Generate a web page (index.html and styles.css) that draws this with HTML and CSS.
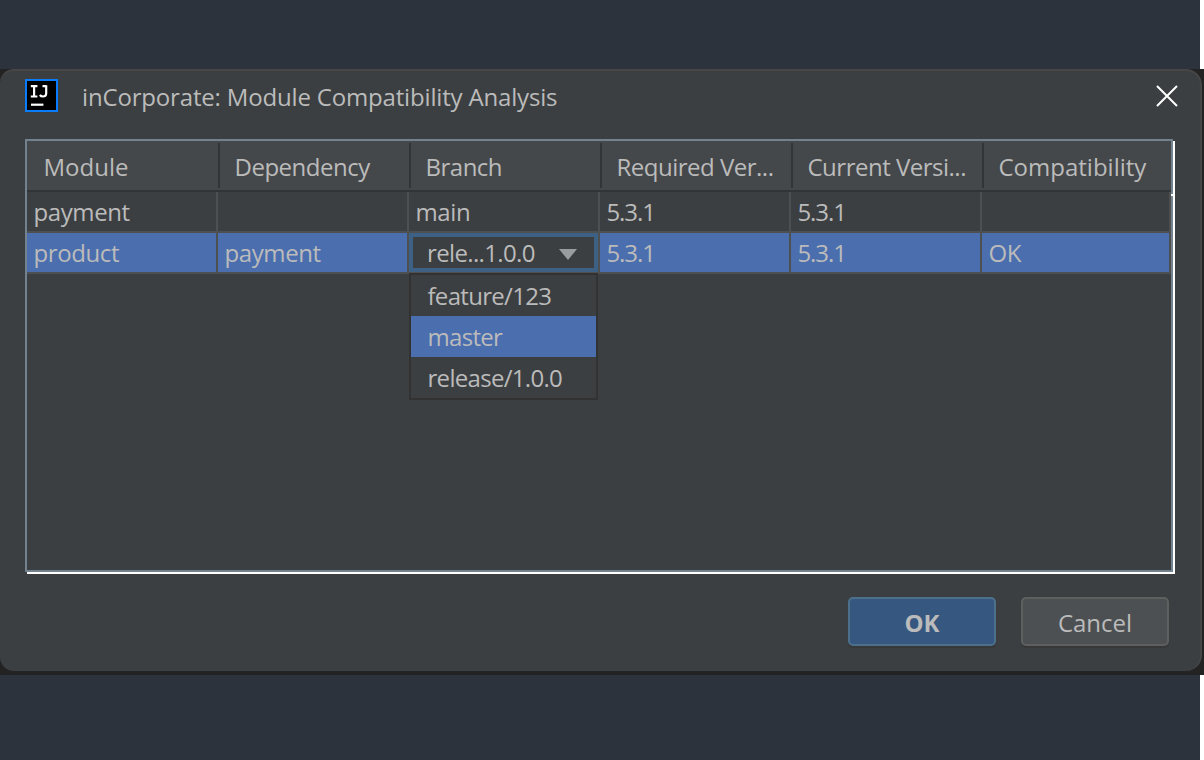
FILE: index.html
```html
<!DOCTYPE html>
<html lang="en">
<head>
<meta charset="utf-8">
<title>inCorporate: Module Compatibility Analysis</title>
<link rel="stylesheet" href="styles.css">
</head>
<body>
<div class="strip strip-top"></div>
<main class="window-area">
  <section class="dialog">
    <header class="titlebar">
      <svg class="app-icon" viewBox="0 0 33 33" width="33" height="33">
        <rect x="1" y="1" width="31" height="31" fill="#000" stroke="#087cfa" stroke-width="2"/>
        <path d="M5.8 7.2h6.6M9.1 7v10.5M5.8 17.5h6.6M21.2 6.2v8q0 3.3-3.2 3.3-2 0-3.2-1.5M17.5 7.2h3.7" fill="none" stroke="#fff" stroke-width="2.2"/>
        <rect x="6" y="24.6" width="12.4" height="2.2" fill="#fff"/>
      </svg>
      <h1 class="title">inCorporate: Module Compatibility Analysis</h1>
      <svg class="close" viewBox="0 0 22 22" width="22" height="22"><path d="M1 1L21 21M21 1L1 21" stroke="#fff" stroke-width="2" fill="none"/></svg>
    </header>
    <div class="table">
      <div class="row head">
        <div class="h">Module</div><div class="h tight">Dependency</div><div class="h tight">Branch</div><div class="h tight">Required Ver...</div><div class="h tight">Current Versi...</div><div class="h">Compatibility</div>
      </div>
      <div class="row">
        <div class="c">payment</div><div class="c"></div><div class="c">main</div><div class="c num">5.3.1</div><div class="c num">5.3.1</div><div class="c"></div>
      </div>
      <div class="row selected">
        <div class="c">product</div><div class="c">payment</div>
        <div class="c editor">
          <div class="combo"><span class="combo-text">rele...1.0.0</span><svg class="arrow" width="18" height="11" viewBox="0 0 18 11"><path d="M0 0h18L9 11z" fill="#9a9da0"/></svg></div>
          <div class="popup">
            <div class="option">feature/123</div>
            <div class="option active">master</div>
            <div class="option">release/1.0.0</div>
          </div>
        </div>
        <div class="c num">5.3.1</div><div class="c num">5.3.1</div><div class="c">OK</div>
      </div>
    </div>
    <footer class="actions">
      <button class="btn primary">OK</button>
      <button class="btn">Cancel</button>
    </footer>
  </section>
</main>
<div class="strip strip-bottom"></div>
</body>
</html>
```
FILE: styles.css
```css
* { box-sizing: border-box; }
body {
  margin: 0;
  width: 1204px;
  height: 760px;
  overflow: hidden;
  display: flex;
  flex-direction: column;
  background: #fff;
  color: #bbb;
  font: 24px/30px "Open Sans", "Noto Sans", sans-serif;
  white-space: nowrap;
}
.strip { width: 1200px; background: #2d333d; }
.strip-top { height: 69px; }
.strip-bottom { height: 85px; }
.window-area { height: 606px; background: #232323; }
.dialog {
  width: 1202px;
  height: 602px;
  background: #3c3f41;
  border: solid #464646;
  border-width: 2px 2px 0 0;
  border-radius: 14px 16px 16px 14px;
}
.titlebar {
  height: 68px;
  padding: 8px 22px 0 25px;
  display: flex;
  align-items: flex-start;
}
.title {
  margin: 3px auto 0 24px;
  font-size: 24px;
  font-weight: 400;
  letter-spacing: -0.17px;
}
.close { margin-top: 6px; }
.table {
  position: relative;
  width: 1148px;
  height: 433px;
  margin-left: 25px;
  border: 2px solid #72838f;
  box-shadow: 2px 2px #fff;
}
.table::after {
  content: "";
  position: absolute;
  right: -2px;
  top: 53px;
  width: 2px;
  height: 2px;
  background: #fff;
}
.row {
  width: 1144px;
  height: 41px;
  display: grid;
  grid-template-columns: repeat(5, 191px) 189px;
}
.head { height: 51px; background: #45484a; border-bottom: 2px solid #323537; }
.h { padding: 11px 0 0 16.5px; position: relative; letter-spacing: 0; }
.tight { letter-spacing: -0.5px; }
.h + .h::before {
  content: "";
  position: absolute;
  left: 0;
  top: 2px;
  width: 2px;
  height: 45px;
  background: #323537;
}
.c {
  padding: 5px 0 0 6.5px;
  border: solid #4d4f51;
  border-width: 0 2px 2px 0;
  letter-spacing: -0.4px;
}
.num { letter-spacing: -1.1px; }
.selected .c { background: #4b6eaf; }
.selected .editor { padding: 0; position: relative; }
.combo {
  height: 39px;
  padding: 0 17px 0 14px;
  border: 4px solid #3d6185;
  background: #3c3f41;
  display: flex;
  align-items: center;
  justify-content: space-between;
  letter-spacing: -0.65px;
}
.arrow { margin-top: 3px; }
.popup {
  position: absolute;
  left: 0;
  top: 40px;
  width: 189px;
  height: 127px;
  border: 2px solid #323232;
  background: #3c3f41;
  letter-spacing: -0.7px;
}
.option { height: 41px; padding: 6px 0 0 16.5px; }
.active { background: #4b6eaf; }
.actions { display: flex; justify-content: flex-end; gap: 25px; padding: 25px 31px 0 0; }
.btn {
  width: 148px;
  height: 49px;
  padding: 2px 0 0;
  border: 2px solid #5e6060;
  border-radius: 5px;
  background: #4c5052;
  color: #bbb;
  font: inherit;
  box-shadow: 0 2px 1px #36383a;
}
.primary { background: #365880; border-color: #4c708c; font-weight: 700; }
```
